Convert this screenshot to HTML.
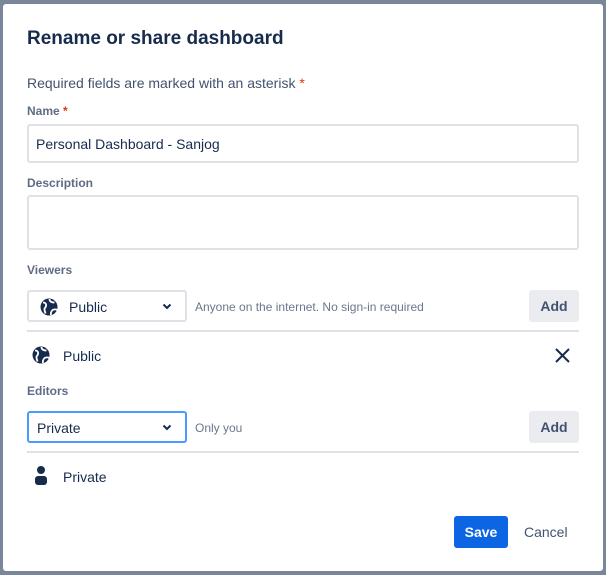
<!DOCTYPE html>
<html><head><style>
body{margin:0;width:606px;height:575px;background:#7a869a;position:relative;overflow:hidden;font-family:"Liberation Sans",sans-serif;color:#172b4d}
.d{position:absolute;left:3px;top:4px;width:600px;height:567px;background:#fff;border-radius:3px}
.a{position:absolute}
h1{position:absolute;left:24px;top:24px;margin:0;font-size:19px;font-weight:bold;color:#172b4d}
.lbl{font-size:12px;font-weight:bold;color:#5e6c84}
.inp{border:2px solid #dfe1e6;border-radius:3px;background:#fff;box-sizing:border-box}
.btn{background:#ebecf0;border-radius:3px;font-size:14px;font-weight:bold;color:#42526e;text-align:center;line-height:32px;width:50px;height:32px}
.hr{height:2px;background:#dfe1e6;left:24px;width:552px}
.t{font-size:14px}
.s{font-size:12px;color:#6b778c}
.chev{position:absolute;left:133px;top:11px}
</style></head><body>
<div class="d">
<h1>Rename or share dashboard</h1>
<div class="a" style="left:24px;top:71px;font-size:14px;color:#42526e">Required fields are marked with an asterisk <span style="color:#de350b">*</span></div>
<div class="a lbl" style="left:24px;top:100px">Name<span style="color:#de350b"> *</span></div>
<div class="a inp" style="left:24px;top:120px;width:552px;height:39px"><span class="t" style="position:absolute;left:7px;top:10px">Personal Dashboard - Sanjog</span></div>
<div class="a lbl" style="left:24px;top:172px">Description</div>
<div class="a inp" style="left:24px;top:191px;width:552px;height:55px"></div>
<div class="a lbl" style="left:24px;top:259px">Viewers</div>
<div class="a inp" style="left:24px;top:286px;width:160px;height:32px">
<svg style="position:absolute;left:11px;top:6px" width="18" height="18" viewBox="0 0 18 18"><circle cx="9" cy="9" r="8.5" fill="#172b4d"/><path d="M3 4.5c2.5 0 3.5 1.5 3 3.5s-2 2-1.5 4l1 3.5M9.5 1c0 2.5 2 3.5 5 3.5M11 17c-.5-3 1-5 3-5.5 1.5-.3 3 .3 3.5 1" stroke="#fff" stroke-width="1.8" fill="none"/></svg>
<span class="t" style="position:absolute;left:40px;top:7px">Public</span>
<svg class="chev" width="10" height="7" viewBox="0 0 10 7"><path d="M1.5 1.5L5 5l3.5-3.5" stroke="#172b4d" stroke-width="2" fill="none"/></svg></div>
<div class="a s" style="left:192px;top:296px">Anyone on the internet. No sign-in required</div>
<div class="a btn" style="left:526px;top:286px">Add</div>
<div class="a hr" style="top:326px"></div>
<svg class="a" style="left:29px;top:342px" width="18" height="18" viewBox="0 0 18 18"><circle cx="9" cy="9" r="8.5" fill="#172b4d"/><path d="M3 4.5c2.5 0 3.5 1.5 3 3.5s-2 2-1.5 4l1 3.5M9.5 1c0 2.5 2 3.5 5 3.5M11 17c-.5-3 1-5 3-5.5 1.5-.3 3 .3 3.5 1" stroke="#fff" stroke-width="1.8" fill="none"/></svg>
<div class="a t" style="left:60px;top:344px">Public</div>
<svg class="a" style="left:552px;top:344px" width="15" height="15" viewBox="0 0 15 15"><path d="M1 1L14 14M14 1L1 14" stroke="#172b4d" stroke-width="2"/></svg>
<div class="a lbl" style="left:24px;top:380px">Editors</div>
<div class="a inp" style="left:24px;top:407px;width:160px;height:32px;border-color:#4c9aff"><span class="t" style="position:absolute;left:8px;top:7px">Private</span><svg class="chev" width="10" height="7" viewBox="0 0 10 7"><path d="M1.5 1.5L5 5l3.5-3.5" stroke="#172b4d" stroke-width="2" fill="none"/></svg></div>
<div class="a s" style="left:192px;top:417px">Only you</div>
<div class="a btn" style="left:526px;top:407px">Add</div>
<div class="a hr" style="top:447px"></div>
<svg class="a" style="left:31px;top:462px" width="14" height="19" viewBox="0 0 14 19"><circle cx="7" cy="4" r="4" fill="#172b4d"/><rect x="1" y="10" width="12" height="9" rx="3" fill="#172b4d"/></svg>
<div class="a t" style="left:60px;top:465px">Private</div>
<div class="a" style="left:451px;top:512px;width:54px;height:32px;background:#0c66e4;border-radius:3px;color:#fff;font-size:14px;font-weight:bold;text-align:center;line-height:32px">Save</div>
<div class="a" style="left:521px;top:520px;font-size:14px;color:#42526e">Cancel</div>
</div>
</body></html>
